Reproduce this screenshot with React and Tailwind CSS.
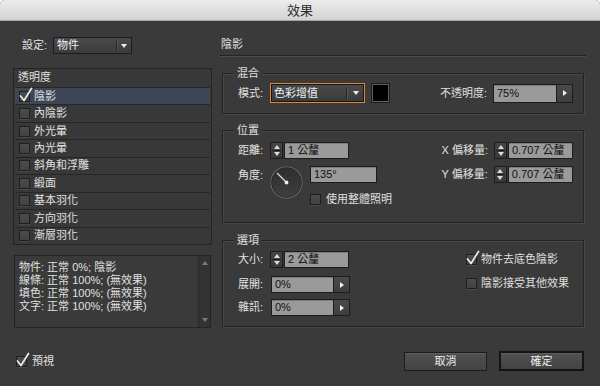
import React from "react";

function Check({ checked }) {
  return (
    <span className="relative inline-block w-[11px] h-[11px] shrink-0 border border-[#1f1f1f] bg-gradient-to-b from-[#4c4c4c] to-[#424242] shadow-[0_1px_0_#4a4a4a]">
      {checked && (
        <svg className="absolute left-[-1px] top-[-5px] w-[14px] h-[15px]" viewBox="0 0 14 15">
          <path d="M1.5 9 L5 13.5 L12.5 1.5" stroke="#ececec" strokeWidth="1.7" fill="none" strokeLinecap="round" strokeLinejoin="round" />
        </svg>
      )}
    </span>
  );
}

function Spinner() {
  return (
    <div className="w-[13px] h-[17px] shrink-0 border border-[#1c1c1c] bg-gradient-to-b from-[#454545] to-[#383838] flex flex-col items-center justify-center gap-[1px]">
      <span className="w-0 h-0 border-x-[3px] border-x-transparent border-b-[4px] border-b-[#dcdcdc]" />
      <span className="w-[9px] h-px bg-[#1f1f1f]" />
      <span className="w-0 h-0 border-x-[3px] border-x-transparent border-t-[4px] border-t-[#dcdcdc]" />
    </div>
  );
}

function Field({ className, text }) {
  return (
    <div className={`h-[17px] border border-[#1c1c1c] bg-[#9a9a9a] text-[#111] pl-[3px] flex items-center shadow-[inset_0_1px_0_#7c7c7c] ${className}`}>
      {text}
    </div>
  );
}

function ArrowField({ inputW, h, text }) {
  return (
    <div className={`flex ${h} border border-[#1c1c1c]`}>
      <div className={`${inputW} bg-[#9a9a9a] text-[#111] pl-[3px] flex items-center shadow-[inset_0_1px_0_#7c7c7c]`}>{text}</div>
      <div className="w-[16px] bg-gradient-to-b from-[#4a4a4a] to-[#3e3e3e] border-l border-[#1c1c1c] flex items-center justify-center">
        <span className="w-0 h-0 border-y-[3.5px] border-y-transparent border-l-[4px] border-l-[#eeeeee]" />
      </div>
    </div>
  );
}

function Dropdown({ className, text, orange, arrowW }) {
  return (
    <div
      className={`flex items-center border ${orange ? "border-[#e3872c] shadow-[inset_0_0_0_1px_#151515]" : "border-[#1c1c1c]"} bg-gradient-to-b from-[#4a4a4a] to-[#3b3b3b] ${className}`}
    >
      <span className="flex-1 pl-[3px] text-[#eef2f8]">{text}</span>
      <span className="w-px self-stretch my-[3px] bg-[#222] shadow-[1px_0_0_#5a5a5a]" />
      <span className={`${arrowW} flex justify-center`}>
        <span className="w-0 h-0 border-x-[3.5px] border-x-transparent border-t-[4px] border-t-[#eeeeee]" />
      </span>
    </div>
  );
}

function Group({ title, className, children }) {
  return (
    <div className={`mx-[2px] border border-[#242424] shadow-[1px_1px_0_#474747,inset_1px_1px_0_#474747] flex flex-col ${className}`}>
      <div className="-mt-[7px] ml-[11px] px-[3px] bg-[#3a3a3a] self-start leading-[13px]">{title}</div>
      {children}
    </div>
  );
}

function Dial() {
  return (
    <svg width="33" height="33" viewBox="0 0 33 33" className="shrink-0">
      <defs>
        <linearGradient id="dg" x1="0" y1="0" x2="0" y2="1">
          <stop offset="0" stopColor="#2e2e2e" />
          <stop offset="1" stopColor="#3e3e3e" />
        </linearGradient>
      </defs>
      <circle cx="16.5" cy="16.5" r="16" fill="#777" />
      <circle cx="16.5" cy="16.5" r="15" fill="url(#dg)" stroke="#222" strokeWidth="0.8" />
      <line x1="16.5" y1="16.5" x2="7" y2="7" stroke="#dddddd" strokeWidth="1.3" />
      <circle cx="16.5" cy="16.5" r="1.9" fill="#eeeeee" />
    </svg>
  );
}

const items = ["陰影", "內陰影", "外光暈", "內光暈", "斜角和浮雕", "緞面", "基本羽化", "方向羽化", "漸層羽化"];

export default function App() {
  return (
    <div className="w-[600px] h-[386px] bg-[#3a3a3a] flex flex-col overflow-hidden rounded-t-[5px] font-[Liberation_Sans,Noto_Sans_CJK_TC,sans-serif] text-[11px] leading-[13px] text-[#e0e0e0]">
      <div className="h-[21px] shrink-0 bg-gradient-to-b from-[#ececec] to-[#d3d3d3] border-b border-[#a5a5a5] flex items-center justify-center text-[13px] text-[#2e2e2e]">
        效果
      </div>
      <div className="flex flex-1">
        {/* Left column */}
        <div className="ml-[13px] w-[199px] flex flex-col pt-[16px]">
          <div className="flex items-center h-[17px]">
            <span className="ml-[9px] w-[31px]">設定:</span>
            <Dropdown className="w-[79px] h-[17px]" text="物件" arrowW="w-[14px]" />
          </div>
          <div className="mt-[14px] h-[177px] border border-[#242424] bg-[#383838] flex flex-col px-px">
            <div className="h-[18px] pl-[3px] flex items-center">透明度</div>
            {items.map((t, i) => (
              <div
                key={t}
                className={`h-[17.5px] flex items-center pl-[4px] gap-[4px] border-t border-[#262626] ${i === 0 ? "bg-[#3d4657]" : ""}`}
              >
                <Check checked={i === 0} />
                <span>{t}</span>
              </div>
            ))}
          </div>
          <div className="mt-[10px] mx-px h-[73px] border border-[#242424] bg-[#3a3a3a] flex">
            <div className="flex-1 pl-[4px] pt-[5px] leading-[13px]">
              <div>物件: 正常 0%; 陰影</div>
              <div>線條: 正常 100%; (無效果)</div>
              <div>填色: 正常 100%; (無效果)</div>
              <div>文字: 正常 100%; (無效果)</div>
            </div>
            <div className="w-[12px] bg-[#333333] border-l border-[#2a2a2a] flex flex-col justify-between items-center py-[5px]">
              <span className="w-0 h-0 border-x-[3.5px] border-x-transparent border-b-[4px] border-b-[#7a7a7a]" />
              <span className="w-0 h-0 border-x-[3.5px] border-x-transparent border-t-[4px] border-t-[#7a7a7a]" />
            </div>
          </div>
          <div className="mt-[28px] pl-[3px] flex items-center gap-[5px] h-[11px]">
            <Check checked />
            <span>預視</span>
          </div>
        </div>

        {/* Right column */}
        <div className="ml-[8px] w-[366px] flex flex-col">
          <div className="pt-[17px] pb-[4px] pl-[1px] border-b border-[#232323] shadow-[0_1px_0_#4c4c4c]">陰影</div>

          <Group title="混合" className="mt-[17px] h-[41px]">
            <div className="mt-[3px] flex items-center h-[20px] pl-[15px] pr-[10px]">
              <span className="w-[32px]">模式:</span>
              <Dropdown className="w-[95px] h-[20px]" text="色彩增值" orange arrowW="w-[17px]" />
              <div className="ml-[6px] w-[19px] h-[20px] border border-[#1c1c1c] bg-black shadow-[inset_0_0_0_1px_#5e5e5e]" />
              <span className="ml-auto mr-[6px]">不透明度:</span>
              <ArrowField inputW="w-[62px]" h="h-[19px]" text="75%" />
            </div>
          </Group>

          <Group title="位置" className="mt-[16px] h-[93px]">
            <div className="mt-[5px] flex pl-[15px] pr-[10px]">
              <div className="flex flex-col">
                <div className="flex items-center h-[17px]">
                  <span className="w-[32px]">距離:</span>
                  <Spinner />
                  <Field className="w-[65px] ml-px" text="1 公釐" />
                </div>
                <div className="flex mt-[7px]">
                  <span className="w-[32px] pt-[3px]">角度:</span>
                  <Dial />
                  <div className="ml-[7px] flex flex-col">
                    <Field className="w-[67px]" text="135°" />
                    <div className="mt-[10px] flex items-center gap-[5px]">
                      <Check />
                      <span>使用整體照明</span>
                    </div>
                  </div>
                </div>
              </div>
              <div className="ml-auto flex flex-col gap-[7px]">
                <div className="flex items-center h-[17px]">
                  <span className="mr-[6px]">X 偏移量:</span>
                  <Spinner />
                  <Field className="w-[65px] ml-px" text="0.707 公釐" />
                </div>
                <div className="flex items-center h-[17px]">
                  <span className="mr-[6px]">Y 偏移量:</span>
                  <Spinner />
                  <Field className="w-[65px] ml-px" text="0.707 公釐" />
                </div>
              </div>
            </div>
          </Group>

          <Group title="選項" className="mt-[17px] h-[87px]">
            <div className="mt-[4px] flex pl-[15px]">
              <div className="w-[228px] flex flex-col">
                <div className="flex items-center h-[17px]">
                  <span className="w-[32px]">大小:</span>
                  <Spinner />
                  <Field className="w-[65px] ml-px" text="2 公釐" />
                </div>
                <div className="mt-[8px] flex items-center">
                  <span className="w-[33px]">展開:</span>
                  <ArrowField inputW="w-[61px]" h="h-[17px]" text="0%" />
                </div>
                <div className="mt-[6px] flex items-center">
                  <span className="w-[33px]">雜訊:</span>
                  <ArrowField inputW="w-[61px]" h="h-[17px]" text="0%" />
                </div>
              </div>
              <div className="flex flex-col mt-[3px] gap-[13px]">
                <div className="flex items-center gap-[4px] h-[11px]">
                  <Check checked />
                  <span>物件去底色陰影</span>
                </div>
                <div className="flex items-center gap-[4px] h-[11px]">
                  <Check />
                  <span>陰影接受其他效果</span>
                </div>
              </div>
            </div>
          </Group>

          <div className="mt-[25px] flex justify-end gap-[12px] pr-[2px]">
            <button className="w-[83px] h-[19px] border border-[#1c1c1c] bg-gradient-to-b from-[#515151] to-[#434343] text-[#eeeeee] leading-[13px] shadow-[inset_0_1px_0_#5c5c5c]">
              取消
            </button>
            <button className="w-[85px] h-[20px] -mt-px border-2 border-[#141414] bg-gradient-to-b from-[#515151] to-[#434343] text-[#eeeeee] leading-[13px] shadow-[inset_0_1px_0_#5c5c5c]">
              確定
            </button>
          </div>
        </div>
      </div>
    </div>
  );
}
